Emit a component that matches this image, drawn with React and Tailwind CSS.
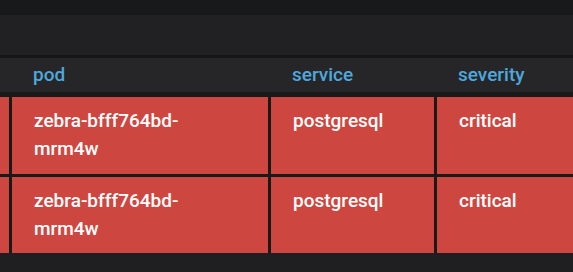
const rows = [
  { pod: 'zebra-bfff764bd-mrm4w', service: 'postgresql', severity: 'critical' },
  { pod: 'zebra-bfff764bd-mrm4w', service: 'postgresql', severity: 'critical' },
]

const cols = 'grid grid-cols-[9px_256px_163px_200px] gap-x-[3px]'

export default function App() {
  return (
    <div
      className="w-[573px] h-[272px] overflow-hidden bg-[#18191b]"
      style={{ fontFamily: 'Roboto, "Liberation Sans", sans-serif' }}
    >
      <div className="mt-[15px] h-[257px] bg-[#212123] flex flex-col">
        {/* panel title strip */}
        <div className="h-[40px] shrink-0" />
        <div className="h-[3px] bg-[#161617] shrink-0" />

        {/* column headers */}
        <div className={`${cols} h-[34px] bg-[#262628] items-center shrink-0`}>
          <div />
          <div className="pl-[21px] text-[19px] font-medium text-[#4fa8dc]">pod</div>
          <div className="pl-[21px] text-[19px] font-medium text-[#4fa8dc]">service</div>
          <div className="pl-[21px] text-[19px] font-medium text-[#4fa8dc]">severity</div>
        </div>

        {/* alert rows */}
        <div className={`${cols} gap-y-[3px] bg-[#19191a] py-[5px] pb-0 shrink-0`}>
          {rows.map((row, i) => (
            <Row key={i} row={row} tall={i === 1} />
          ))}
        </div>
        <div className="flex-1 bg-[#1f1f21]" />
      </div>
    </div>
  )
}

function Row({ row, tall }) {
  const cell = `bg-[#cd4740] text-white text-[19px] font-medium leading-[28px] pt-[10px] ${tall ? 'h-[76px]' : 'h-[77px]'}`
  const [head, tail] = row.pod.split(/(?<=bd-)/)
  return (
    <>
      <div className={cell} />
      <div className={`${cell} pl-[22px]`}>
        <div>{head}</div>
        <div>{tail}</div>
      </div>
      <div className={`${cell} pl-[22px]`}>{row.service}</div>
      <div className={`${cell} pl-[22px]`}>{row.severity}</div>
    </>
  )
}
